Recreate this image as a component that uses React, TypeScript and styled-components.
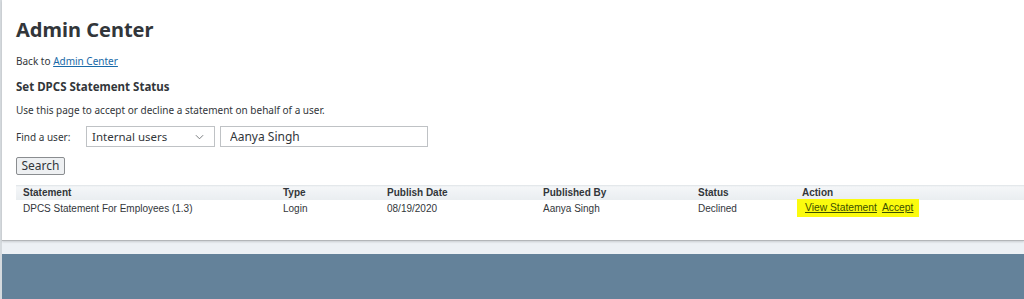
import React from 'react';
import styled, { createGlobalStyle } from 'styled-components';

const GlobalStyle = createGlobalStyle`
  html, body {
    margin: 0;
    padding: 0;
    background: #edf1f5;
  }
  body {
    font-family: 'Noto Sans', 'Open Sans', Arial, sans-serif;
    color: #32363a;
  }
`;

type Row = {
  statement: string;
  type: string;
  date: string;
  publishedBy: string;
  status: string;
};

const rows: Row[] = [
  {
    statement: 'DPCS Statement For Employees (1.3)',
    type: 'Login',
    date: '08/19/2020',
    publishedBy: 'Aanya Singh',
    status: 'Declined',
  },
];

const columns = [
  { label: 'Statement', width: 260 },
  { label: 'Type', width: 104 },
  { label: 'Publish Date', width: 156 },
  { label: 'Published By', width: 155 },
  { label: 'Status', width: 104 },
  { label: 'Action', width: 0 },
];

const App: React.FC = () => (
  <Page>
    <GlobalStyle />
    <Panel>
      <Title>Admin Center</Title>
      <BackLine>
        Back to <TextLink href="#">Admin Center</TextLink>
      </BackLine>
      <SectionTitle>Set DPCS Statement Status</SectionTitle>
      <Hint>Use this page to accept or decline a statement on behalf of a user.</Hint>
      <FindRow>
        <FindLabel>Find a user:</FindLabel>
        <SelectBox>
          <span>Internal users</span>
          <Chevron viewBox="0 0 10 6" width="9" height="6">
            <path d="M1 1l4 4 4-4" fill="none" stroke="#6a6d70" strokeWidth="1" />
          </Chevron>
        </SelectBox>
        <UserInput defaultValue="Aanya Singh" />
      </FindRow>
      <SearchButton>Search</SearchButton>
      <Table>
        <colgroup>
          {columns.map((c) => (
            <col key={c.label} style={c.width ? { width: c.width } : undefined} />
          ))}
        </colgroup>
        <thead>
          <tr>
            {columns.map((c) => (
              <HeadCell key={c.label}>{c.label}</HeadCell>
            ))}
          </tr>
        </thead>
        <tbody>
          {rows.map((r) => (
            <tr key={r.statement}>
              <Cell>{r.statement}</Cell>
              <Cell>{r.type}</Cell>
              <Cell>{r.date}</Cell>
              <Cell>{r.publishedBy}</Cell>
              <Cell>{r.status}</Cell>
              <ActionCell>
                <Highlight>
                  <ActionLink href="#">View Statement</ActionLink>
                  <ActionLink href="#">Accept</ActionLink>
                </Highlight>
              </ActionCell>
            </tr>
          ))}
        </tbody>
      </Table>
    </Panel>
    <Footer />
  </Page>
);

export default App;

const Page = styled.div`
  min-height: 100vh;
  display: flex;
  flex-direction: column;
  border-left: 2px solid #d5dade;
  box-sizing: border-box;
`;

const Panel = styled.div`
  background: #ffffff;
  height: 241px;
  box-sizing: border-box;
  padding: 17px 0 0 14px;
  border-bottom: 1px solid #b3b6b9;
  box-shadow: 0 1px 2px rgba(0, 0, 0, 0.15);
`;

const Title = styled.h1`
  margin: 0;
  font-size: 20px;
  line-height: 26px;
  font-weight: 700;
  color: #32363a;
`;

const BackLine = styled.p`
  margin: 11px 0 0;
  font-size: 10px;
  line-height: 14px;
  color: #32363a;
`;

const TextLink = styled.a`
  color: #1a6aa8;
  text-decoration: underline;
`;

const SectionTitle = styled.h2`
  margin: 11px 0 0;
  font-size: 11.5px;
  line-height: 16px;
  font-weight: 700;
  color: #32363a;
`;

const Hint = styled.p`
  margin: 8px 0 0;
  font-size: 10px;
  line-height: 14px;
  color: #32363a;
`;

const FindRow = styled.div`
  display: flex;
  align-items: center;
  margin-top: 9px;
  height: 21px;
`;

const FindLabel = styled.span`
  font-size: 10px;
  color: #32363a;
  width: 70px;
`;

const SelectBox = styled.div`
  display: flex;
  align-items: center;
  justify-content: space-between;
  box-sizing: border-box;
  width: 129px;
  height: 21px;
  padding: 0 10px 0 5px;
  border: 1px solid #bfc2c5;
  font-size: 11.5px;
  color: #32363a;
  background: #fff;
`;

const Chevron = styled.svg`
  display: block;
`;

const UserInput = styled.input`
  box-sizing: border-box;
  width: 208px;
  height: 21px;
  margin-left: 5px;
  padding: 0 9px;
  border: 1px solid #bfc2c5;
  font-family: 'Noto Sans', 'Open Sans', Arial, sans-serif;
  font-size: 12px;
  color: #32363a;
  outline: none;
`;

const SearchButton = styled.button`
  display: block;
  box-sizing: border-box;
  margin-top: 10px;
  width: 49px;
  height: 18px;
  padding: 0;
  font-family: 'Noto Sans', 'Open Sans', Arial, sans-serif;
  font-size: 12px;
  line-height: 16px;
  color: #32363a;
  background: #eef0f2;
  border: 1px solid #8a8d90;
  border-radius: 2px;
`;

const Table = styled.table`
  margin-top: 10px;
  width: calc(100% + 2px);
  border-collapse: collapse;
  table-layout: fixed;
  font-family: 'Liberation Sans', Arial, sans-serif;
  font-size: 10px;
  color: #32363a;
`;

const HeadCell = styled.th`
  text-align: left;
  font-weight: 700;
  height: 14px;
  padding: 0 0 0 7px;
  line-height: 14px;
  background: linear-gradient(#f4f6f8, #e9edf0);
  border-top: 1px solid #e4e8eb;
`;

const Cell = styled.td`
  padding: 0 0 0 7px;
  height: 17px;
  line-height: 17px;
`;

const ActionCell = styled(Cell)`
  padding-left: 2px;
`;

const Highlight = styled.span`
  display: inline-flex;
  gap: 5px;
  padding: 0 6px 0 8px;
  background: #fbfb0e;
  line-height: 18px;
  vertical-align: top;
  margin-top: -1px;
  font-size: 10.3px;
`;

const ActionLink = styled.a`
  color: #3b4f00;
  text-decoration: underline;
`;

const Footer = styled.div`
  margin-top: 13px;
  flex: 1;
  background: #64829a;
`;
